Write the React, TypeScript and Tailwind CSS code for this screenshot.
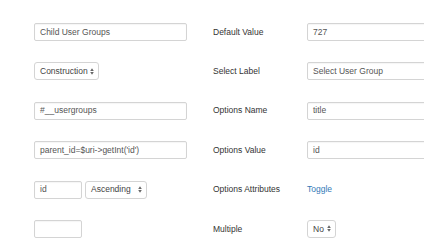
import React from "react";

const font = { fontFamily: '"Liberation Sans", Arial, sans-serif' };

function Arrows() {
  return (
    <svg width="4" height="7" viewBox="0 0 4 7" className="shrink-0">
      <path d="M2 0.3 L3.8 2.9 L0.2 2.9 Z" fill="#666" />
      <path d="M2 6.7 L3.8 4.1 L0.2 4.1 Z" fill="#666" />
    </svg>
  );
}

function Input({ value, w }: { value: string; w: string }) {
  return (
    <div
      className={`${w} h-[18px] border border-[#d4d4d4] rounded-[2px] bg-white flex items-center pl-[5px] text-[8.5px] text-[#555] whitespace-nowrap overflow-hidden shadow-[inset_0_1px_1px_rgba(0,0,0,0.04)]`}
    >
      {value}
    </div>
  );
}

function Select({ value, w }: { value: string; w: string }) {
  return (
    <div
      className={`${w} h-[18px] border border-[#d4d4d4] rounded-[3px] bg-white flex items-center justify-between pl-[5px] pr-[4px] text-[8.5px] text-[#444] whitespace-nowrap`}
    >
      <span>{value}</span>
      <Arrows />
    </div>
  );
}

function Row({
  left,
  label,
  right,
}: {
  left: React.ReactNode;
  label: string;
  right: React.ReactNode;
}) {
  return (
    <div className="flex items-center h-[18px]">
      <div className="w-[179px] shrink-0 flex items-center">{left}</div>
      <div className="w-[94px] shrink-0 text-[8.5px] text-[#333]">{label}</div>
      <div className="shrink-0 flex items-center">{right}</div>
    </div>
  );
}

export default function App() {
  return (
    <div
      className="w-[424px] h-[250px] bg-white overflow-hidden pl-[34px] pt-[23px] flex flex-col gap-[21.4px]"
      style={font}
    >
      <Row
        left={<Input value="Child User Groups" w="w-[153px]" />}
        label="Default Value"
        right={<Input value="727" w="w-[153px]" />}
      />
      <Row
        left={<Select value="Construction" w="w-[65px]" />}
        label="Select Label"
        right={<Input value="Select User Group" w="w-[153px]" />}
      />
      <Row
        left={<Input value="#__usergroups" w="w-[153px]" />}
        label="Options Name"
        right={<Input value="title" w="w-[153px]" />}
      />
      <Row
        left={<Input value="parent_id=$uri->getInt('id')" w="w-[153px]" />}
        label="Options Value"
        right={<Input value="id" w="w-[153px]" />}
      />
      <Row
        left={
          <div className="flex items-center gap-[3px]">
            <Input value="id" w="w-[48px]" />
            <Select value="Ascending" w="w-[62px]" />
          </div>
        }
        label="Options Attributes"
        right={<span className="text-[8.5px] text-[#337ab7]">Toggle</span>}
      />
      <Row
        left={<Input value="" w="w-[48px]" />}
        label="Multiple"
        right={<Select value="No" w="w-[29px]" />}
      />
    </div>
  );
}
